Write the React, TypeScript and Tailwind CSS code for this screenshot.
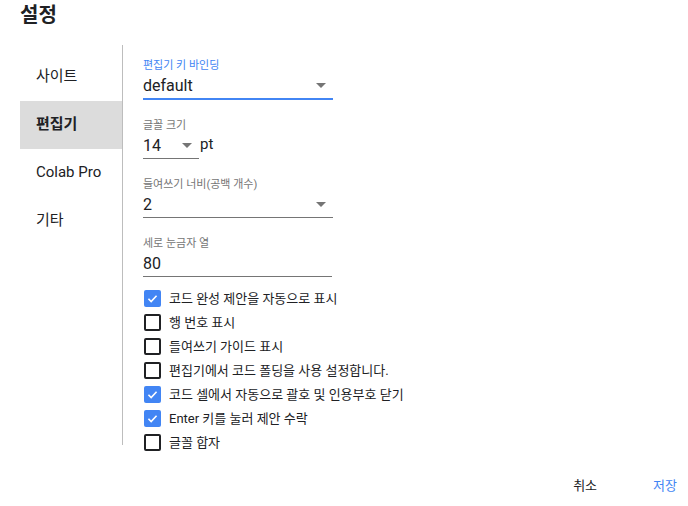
const NAV = ["사이트", "편집기", "Colab Pro", "기타"];

const CHECKS = [
  { label: "코드 완성 제안을 자동으로 표시", on: true },
  { label: "행 번호 표시", on: false },
  { label: "들여쓰기 가이드 표시", on: false },
  { label: "편집기에서 코드 폴딩을 사용 설정합니다.", on: false },
  { label: "코드 셀에서 자동으로 괄호 및 인용부호 닫기", on: true },
  { label: "Enter 키를 눌러 제안 수락", on: true },
  { label: "글꼴 합자", on: false },
];

function Arrow() {
  return (
    <svg width="10" height="5" viewBox="0 0 10 5" className="shrink-0">
      <path d="M0 0h10L5 5z" fill="#757575" />
    </svg>
  );
}

function Field({
  label,
  value,
  width,
  focused,
  arrow,
}: {
  label: string;
  value: string;
  width: number;
  focused?: boolean;
  arrow?: boolean;
}) {
  return (
    <div>
      <div className={`text-[11px] leading-[15px] ${focused ? "text-[#4285f4]" : "text-[#757575]"}`}>{label}</div>
      <div
        className={`flex items-center justify-between pr-[7px] ${focused ? "border-b-2 border-[#4285f4] h-[27px]" : "border-b border-[#757575] h-[26px]"}`}
        style={{ width }}
      >
        <span className="pt-[1px] text-[16px] text-[#202124]">{value}</span>
        {arrow && <Arrow />}
      </div>
    </div>
  );
}

function Check({ on }: { on: boolean }) {
  if (on) {
    return (
      <div className="flex h-[17px] w-[17px] items-center justify-center rounded-[2px] bg-[#4285f4]">
        <svg width="13" height="13" viewBox="0 0 24 24">
          <path d="M4.5 12.5l5 5L19.5 7" fill="none" stroke="white" strokeWidth="3" />
        </svg>
      </div>
    );
  }
  return <div className="h-[17px] w-[17px] rounded-[2px] border-2 border-[#202124]" />;
}

export default function App() {
  return (
    <div
      className="h-[506px] w-[688px] bg-white text-[#202124]"
      style={{ fontFamily: 'Roboto, "Noto Sans CJK KR", sans-serif' }}
    >
      <div className="px-5 pt-[1px] text-[20px] font-bold leading-[28px]">설정</div>
      <div className="ml-5 mt-[16px] flex items-start">
        <div className="w-[103px] shrink-0 border-r border-[#bdbdbd] pt-[8px]">
          {NAV.map((n) => (
            <div
              key={n}
              className={`flex h-[48px] items-center pb-[1px] pl-4 text-[15px] ${n === "편집기" ? "bg-[#dcdcdc] font-bold" : ""}`}
            >
              {n}
            </div>
          ))}
          <div className="h-[200px]" />
        </div>
        <div className="flex flex-col pl-5 pt-[13px]">
          <Field label="편집기 키 바인딩" value="default" width={190} focused arrow />
          <div className="mt-[18px] flex items-end">
            <Field label="글꼴 크기" value="14" width={56} arrow />
            <span className="mb-[4px] ml-[1px] text-[15px]">pt</span>
          </div>
          <div className="mt-[18px]">
            <Field label="들여쓰기 너비(공백 개수)" value="2" width={190} arrow />
          </div>
          <div className="mt-[18px]">
            <Field label="세로 눈금자 열" value="80" width={189} />
          </div>
          <div className="mt-[13px] flex flex-col gap-[7px]">
            {CHECKS.map((c) => (
              <div key={c.label} className="flex h-[17px] items-center gap-[8px] pl-[1px]">
                <Check on={c.on} />
                <span className="text-[13px]">{c.label}</span>
              </div>
            ))}
          </div>
        </div>
      </div>
      <div className="mt-[25px] flex justify-end gap-[56px] pr-[11px] text-[13px]">
        <span>취소</span>
        <span className="text-[#4285f4]">저장</span>
      </div>
    </div>
  );
}
